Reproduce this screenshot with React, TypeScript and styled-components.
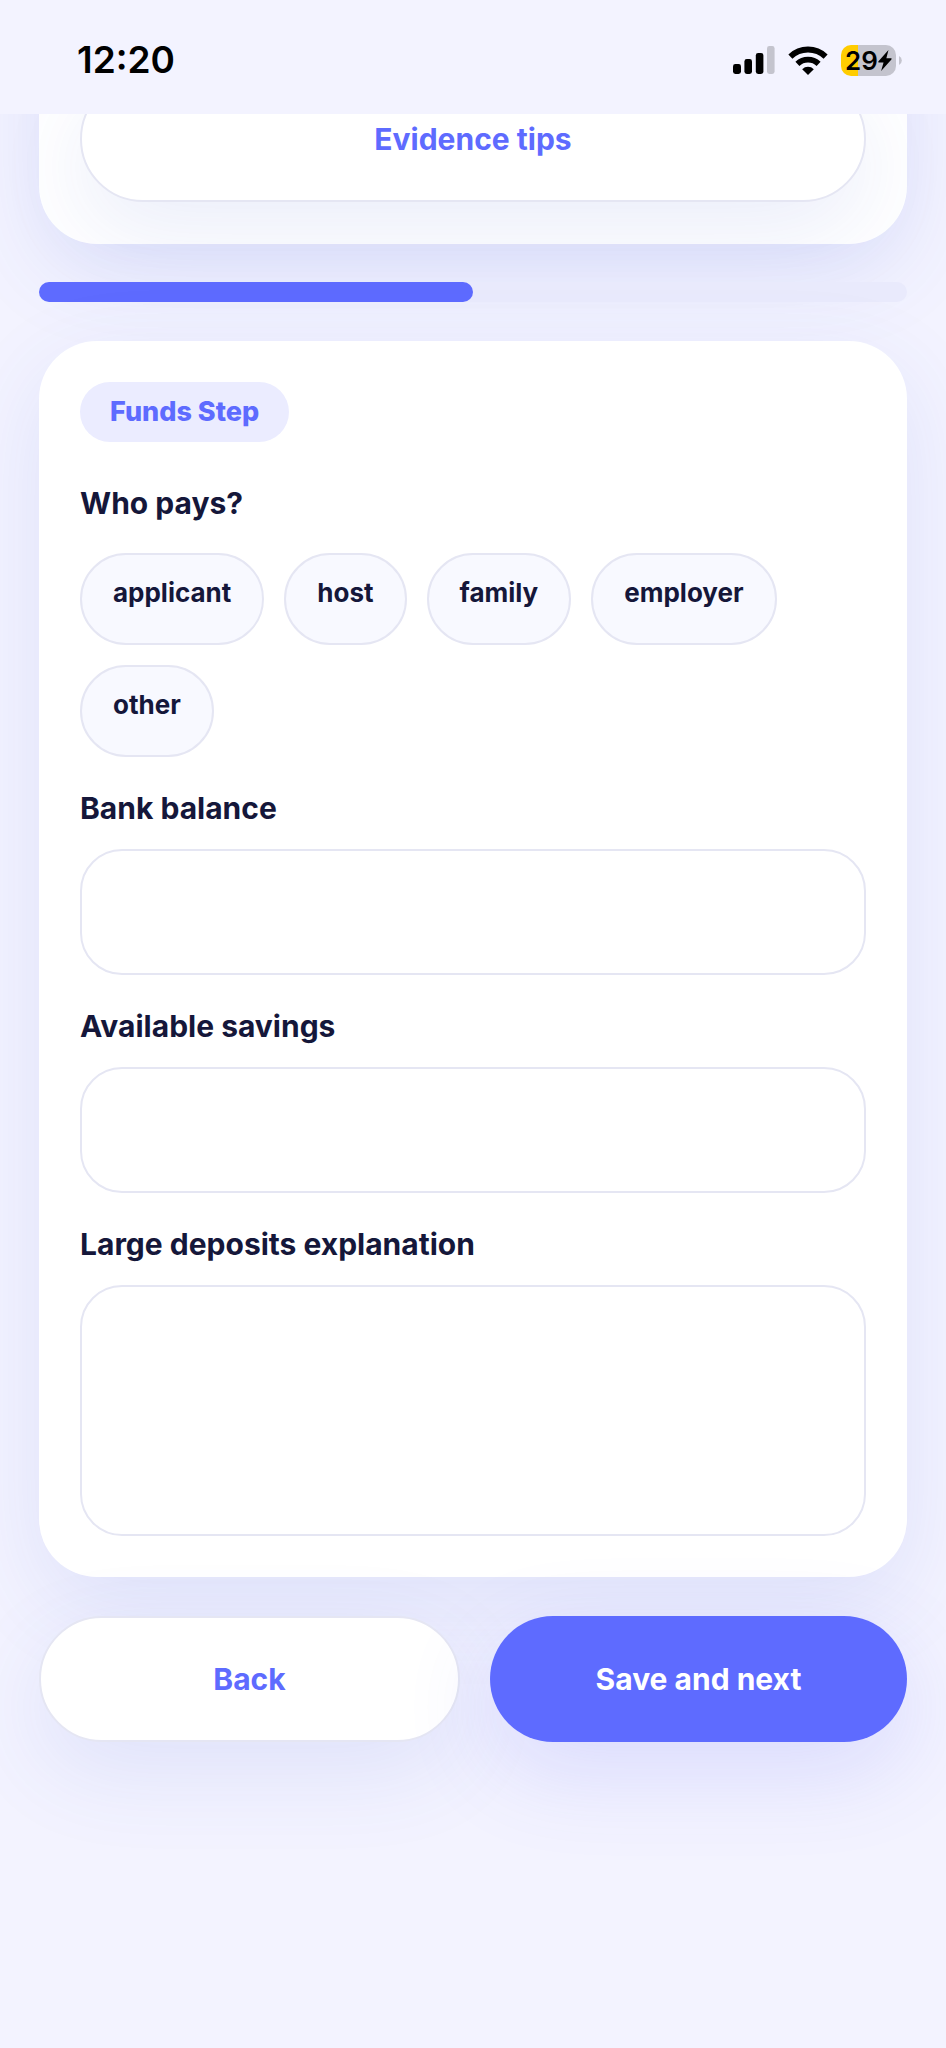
import React, { useState } from "react";
import styled, { createGlobalStyle, css } from "styled-components";

const color = {
  page: "#f3f3ff",
  primary: "#5e6bff",
  ink: "#15173a",
  line: "#e5e6f3",
  chip: "#f8f9ff",
  tint: "#ebecff",
};

const softShadow = "0 28px 92px rgba(66, 88, 210, 0.11)";
const primaryShadow = "0 28px 92px rgba(80, 84, 240, 0.16)";

const GlobalStyle = createGlobalStyle`
  *, *::before, *::after { box-sizing: border-box; }
  body {
    margin: 0;
    background: ${color.page};
    color: ${color.ink};
    font-family: Inter, "Liberation Sans", sans-serif;
  }
  button, input, textarea { font: inherit; color: inherit; margin: 0; }
`;

const Screen = styled.div`
  min-height: 100vh;
  overflow: hidden;
`;

const StatusBar = styled.header`
  position: relative;
  z-index: 1;
  display: flex;
  align-items: center;
  justify-content: space-between;
  height: 114px;
  padding: 6px 44px 0 77px;
  background: ${color.page};
  color: #000;
`;

const Clock = styled.time`
  font-size: 37px;
  line-height: 44px;
  font-weight: 600;
`;

const StatusIcons = styled.div`
  display: flex;
  align-items: center;
  gap: 13px;
`;

const Battery = styled.div`
  display: flex;
  align-items: center;
  gap: 3px;
`;

const BatteryBody = styled.div`
  display: flex;
  align-items: center;
  justify-content: center;
  width: 55px;
  height: 31px;
  border-radius: 10px;
  background: linear-gradient(to right, #ffcc00 30%, #c4c4ce 30%);
  font-size: 26px;
  line-height: 31px;
  font-weight: 600;

  svg {
    flex: none;
  }
`;

/* The list is scrolled, so its first card runs up behind the status bar. */
const Content = styled.main`
  display: flex;
  flex-direction: column;
  margin-top: -200px;
  padding: 0 39px 120px;
`;

const Card = styled.section<{ $scrolled?: boolean }>`
  padding: ${(p) => (p.$scrolled ? "162px 41px 42px" : "41px")};
  border-radius: 58px;
  background: #fff;
  box-shadow: ${softShadow};
`;

const Button = styled.button<{ $primary?: boolean; $wide?: boolean }>`
  display: block;
  height: 126px;
  padding: 0 40px;
  border: 2px solid ${color.line};
  border-radius: 63px;
  background: #fff;
  box-shadow: ${softShadow};
  color: ${color.primary};
  font-size: 30px;
  line-height: 36px;
  font-weight: 700;
  cursor: pointer;
  ${(p) =>
    p.$wide
      ? css`
          width: 100%;
        `
      : css`
          flex: 1 1 0;
        `}
  ${(p) =>
    p.$primary &&
    css`
      border: 0;
      background: ${color.primary};
      box-shadow: ${primaryShadow};
      color: #fff;
    `}
`;

const Track = styled.div`
  height: 20px;
  margin: 38px 0 39px;
  border-radius: 10px;
  background: #e9eafc;
`;

const Fill = styled.div`
  height: 100%;
  border-radius: 10px;
  background: ${color.primary};
`;

const Badge = styled.span`
  display: inline-block;
  padding: 14px 30px;
  border-radius: 30px;
  background: ${color.tint};
  color: ${color.primary};
  font-size: 27px;
  line-height: 32px;
  font-weight: 800;
  vertical-align: top;
`;

const Group = styled.fieldset`
  margin: 43px 0 0;
  padding: 0;
  border: 0;
`;

const labelText = css`
  display: block;
  padding: 0;
  font-size: 30px;
  line-height: 36px;
  font-weight: 700;
`;

const Legend = styled.legend`
  ${labelText}
`;

const Chips = styled.div`
  display: flex;
  flex-wrap: wrap;
  gap: 20px;
  margin-top: 32px;
`;

const Chip = styled.button`
  padding: 22px 31px 34px;
  border: 2px solid ${color.line};
  border-radius: 46px;
  background: ${color.chip};
  font-size: 26px;
  line-height: 32px;
  font-weight: 700;
  cursor: pointer;

  &[aria-pressed="true"] {
    border-color: ${color.primary};
    background: ${color.tint};
  }
`;

const Field = styled.div`
  margin-top: 33px;
`;

const Label = styled.label`
  ${labelText}
  margin-bottom: 23px;
`;

const fieldBox = css`
  display: block;
  width: 100%;
  border: 2px solid ${color.line};
  border-radius: 42px;
  background: #fff;
  font-size: 30px;
  line-height: 36px;
  outline: none;

  &:focus {
    border-color: ${color.primary};
  }
`;

const TextInput = styled.input`
  ${fieldBox}
  height: 126px;
  padding: 0 34px;
`;

const TextArea = styled.textarea`
  ${fieldBox}
  height: 251px;
  padding: 34px;
  resize: none;
`;

const Actions = styled.div`
  display: flex;
  gap: 30px;
  margin-top: 39px;
`;

const SignalIcon = () => (
  <svg width="42" height="28" viewBox="0 0 42 28" aria-hidden="true">
    <rect x="0" y="18" width="8" height="10" rx="2.4" />
    <rect x="11.4" y="13" width="7.6" height="15" rx="2.4" />
    <rect x="22.8" y="7" width="7.6" height="21" rx="2.4" />
    <rect x="34" y="0" width="7.6" height="28" rx="2.4" fill="#c4c4ce" />
  </svg>
);

const WifiIcon = () => (
  <svg width="40" height="29" viewBox="0 0 40 29" aria-hidden="true">
    <g fill="none" stroke="#000" strokeWidth="5.8">
      <path d="M2.4 10.6a25.4 25.4 0 0 1 35.2 0" />
      <path d="M9.4 17.8a15.4 15.4 0 0 1 21.2 0" />
    </g>
    <path d="M20 29l-5.8-5.8a8.2 8.2 0 0 1 11.6 0z" />
  </svg>
);

const BoltIcon = () => (
  <svg width="14" height="21" viewBox="0 0 13 20" aria-hidden="true">
    <path d="M9.8 0L0.3 10.8c-.4.6-.2 1.2.4 1.2h4.4L2.8 20l9.8-11c.4-.6.2-1.2-.4-1.2H7.8z" />
  </svg>
);

const NubIcon = () => (
  <svg width="3" height="9" viewBox="0 0 3 9" aria-hidden="true">
    <path d="M0 0a5 5 0 0 1 0 9z" fill="#c4c4ce" />
  </svg>
);

const payers = ["applicant", "host", "family", "employer", "other"];

export default function App() {
  const [payer, setPayer] = useState<string | null>(null);

  return (
    <>
      <GlobalStyle />
      <Screen>
        <StatusBar>
          <Clock>12:20</Clock>
          <StatusIcons>
            <SignalIcon />
            <WifiIcon />
            <Battery>
              <BatteryBody>
                29
                <BoltIcon />
              </BatteryBody>
              <NubIcon />
            </Battery>
          </StatusIcons>
        </StatusBar>

        <Content>
          <Card $scrolled>
            <Button type="button" $wide>
              Evidence tips
            </Button>
          </Card>

          <Track
            role="progressbar"
            aria-label="Form progress"
            aria-valuemin={0}
            aria-valuemax={100}
            aria-valuenow={50}
          >
            <Fill style={{ width: "50%" }} />
          </Track>

          <Card>
            <Badge>Funds Step</Badge>

            <Group>
              <Legend>Who pays?</Legend>
              <Chips>
                {payers.map((name) => (
                  <Chip
                    key={name}
                    type="button"
                    aria-pressed={payer === name}
                    onClick={() => setPayer(name)}
                  >
                    {name}
                  </Chip>
                ))}
              </Chips>
            </Group>

            <Field>
              <Label htmlFor="balance">Bank balance</Label>
              <TextInput id="balance" inputMode="decimal" />
            </Field>
            <Field>
              <Label htmlFor="savings">Available savings</Label>
              <TextInput id="savings" inputMode="decimal" />
            </Field>
            <Field>
              <Label htmlFor="deposits">Large deposits explanation</Label>
              <TextArea id="deposits" />
            </Field>
          </Card>

          <Actions>
            <Button type="button">Back</Button>
            <Button type="button" $primary>
              Save and next
            </Button>
          </Actions>
        </Content>
      </Screen>
    </>
  );
}
